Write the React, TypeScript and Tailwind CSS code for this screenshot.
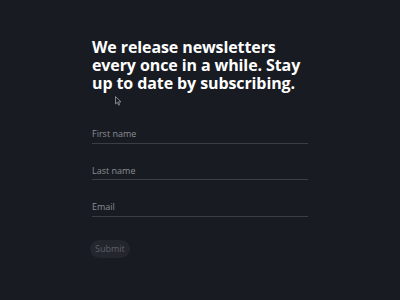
import { useState } from 'react';

export default function App() {
    const [firstName, setFirstName] = useState('');
    const [lastName, setLastName] = useState('');
    const [email, setEmail] = useState('');

    return (
        <main className="relative w-[400px] h-[300px] bg-[#181b22] font-['Open_Sans',sans-serif] overflow-hidden">
            <div className="w-[216px] ml-[92px] pt-[38px]">
                <h1 className="text-[16px] leading-[18px] font-bold text-white tracking-[-0.1px]">
                    We release newsletters every once in a while. Stay up to date by subscribing.
                </h1>
                <form className="flex flex-col mt-[35px]" onSubmit={(e) => e.preventDefault()}>
                    <input type="text" placeholder="First name" value={firstName} onChange={(e) => setFirstName(e.target.value)}
                        className="bg-transparent border-b border-[#3b3e45] text-[9px] text-white placeholder:text-[#8b8e94] pb-[2px] outline-none" />
                    <input type="text" placeholder="Last name" value={lastName} onChange={(e) => setLastName(e.target.value)}
                        className="bg-transparent border-b border-[#3b3e45] text-[9px] text-white placeholder:text-[#8b8e94] pb-[2px] mt-[20px] outline-none" />
                    <input type="email" placeholder="Email" value={email} onChange={(e) => setEmail(e.target.value)}
                        className="bg-transparent border-b border-[#3b3e45] text-[9px] text-white placeholder:text-[#8b8e94] pb-[2px] mt-[20px] outline-none" />
                    <button type="submit" className="self-start -ml-[2px] mt-[23px] h-[18px] px-[5px] rounded-full bg-[#23262d] text-[9px] text-[#5d6067]">
                        Submit
                    </button>
                </form>
            </div>
            {/* mouse pointer captured in the screenshot */}
            <svg className="absolute left-[115px] top-[96px]" width="7" height="10" viewBox="0 0 7 10">
                <path d="M0.5 0.5 L0.5 8 L2.3 6.3 L3.6 9.2 L4.7 8.7 L3.5 5.9 L6 5.9 Z" fill="#1a1d24" stroke="#9a9da3" strokeWidth="0.8" />
            </svg>
        </main>
    );
}
